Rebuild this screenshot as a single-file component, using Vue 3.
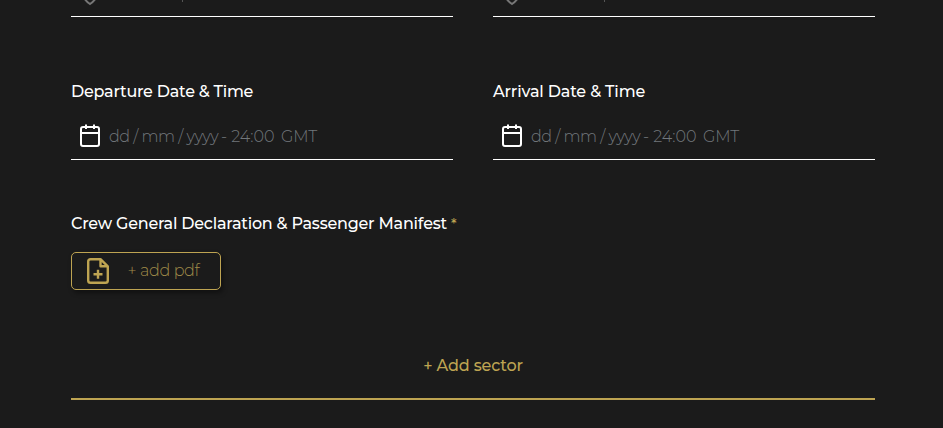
<script setup>
const fields = [
  { label: 'Departure Date & Time', kind: 'departure' },
  { label: 'Arrival Date & Time', kind: 'arrival' }
]
</script>

<template>
  <main class="form">
    <div class="columns">
      <div v-for="f in fields" :key="f.kind" class="location">
        <svg class="pin" width="22" height="6" viewBox="0 0 22 6" fill="none" stroke="#777" stroke-width="2">
          <path d="M5 -2 C6.4 .2 8.7 2.4 11 4 C13.3 2.4 15.6 .2 17 -2" />
        </svg>
        <span class="stem"></span>
      </div>
    </div>

    <div class="columns dates">
      <div v-for="f in fields" :key="f.kind" class="field">
        <label class="label" :class="f.kind"><span>{{ f.label }}</span></label>
        <div class="date">
          <svg width="22" height="24" viewBox="0 0 22 24" fill="none" stroke="#fff" stroke-width="2">
            <rect x="2" y="3" width="18" height="19" rx="2" />
            <path d="M2 9H20M7 .5V5M15 .5V5" />
          </svg>
          <span class="placeholder"><span class="day">dd / mm / yyyy</span><span class="time">- 24:00</span><span class="zone">GMT</span></span>
        </div>
      </div>
    </div>

    <div class="label manifest"><span>Crew General Declaration &amp; Passenger Manifest</span><b class="required">*</b></div>
    <button class="upload">
      <svg width="22" height="26" viewBox="0 0 22 26" fill="none" stroke="#bea452" stroke-width="2.4" stroke-linejoin="round">
        <path d="M13.5 1.2H3.5Q1.2 1.2 1.2 3.5V22.5Q1.2 24.8 3.5 24.8H18.5Q20.8 24.8 20.8 22.5V8.3ZV8.3H20.8" />
        <path d="M11 11.8V20.8M6.5 16.3H15.5" />
      </svg>
      <span class="add-pdf">+ add pdf</span>
    </button>
    <button class="sector"><span>+ Add sector</span></button>
  </main>
</template>

<style>
body { background: #1b1b1b; }
</style>
<style scoped>
.form {
  box-sizing: border-box;
  height: 428px;
  padding: 0 68px 0 71px;
  overflow: hidden;
  background: #1b1b1b;
  color: #fff;
  font: 500 16px/20px Montserrat, Inter, sans-serif;
}
.columns { display: grid; grid-template-columns: 382px 382px; gap: 40px; }
.location { display: flex; height: 16px; border-bottom: 1px solid #fff; }
.pin { margin-left: 8px; }
.stem { width: 1px; height: 2px; margin-left: 81px; background: #555; }
.dates { margin-top: 65px; }
.label { display: block; height: 20px; white-space: nowrap; }
.departure { letter-spacing: -0.24px; }
.arrival { letter-spacing: -0.16px; }
.date { display: flex; align-items: center; height: 46px; margin-top: 11px; border-bottom: 1px solid #fff; }
.date svg { margin-left: 8px; }
.placeholder { display: flex; margin-left: 8px; padding-top: 2px; color: #72777c; font-family: Montserrat, Lato, sans-serif; font-weight: 300; white-space: nowrap; }
.day { width: 112px; letter-spacing: -0.48px; }
.time { width: 60px; letter-spacing: 0; }
.zone { letter-spacing: -0.15px; }
.manifest { display: flex; margin-top: 54px; letter-spacing: -0.22px; }
.required { margin-left: 4px; color: #bea452; font-size: 14px; font-weight: 500; }
.upload {
  display: flex;
  align-items: center;
  box-sizing: border-box;
  width: 150px;
  height: 38px;
  margin: 18px 0 0;
  padding: 0 0 0 15px;
  border: 1px solid #bea452;
  border-radius: 5px;
  background: #1b1b1b;
  box-shadow: 2px 3px 5px #0006;
  color: #a08b49;
  font: 300 16px/20px Montserrat, Lato, sans-serif;
  white-space: nowrap;
}
.add-pdf { margin-left: 18.5px; letter-spacing: -0.35px; }
.sector {
  display: block;
  width: 804px;
  height: 54px;
  margin: 56px 0 0;
  padding: 0 0 12px;
  border: 0;
  border-bottom: 2px solid #bea452;
  background: none;
  color: #bea452;
  font: inherit;
  letter-spacing: -0.15px;
}
</style>
